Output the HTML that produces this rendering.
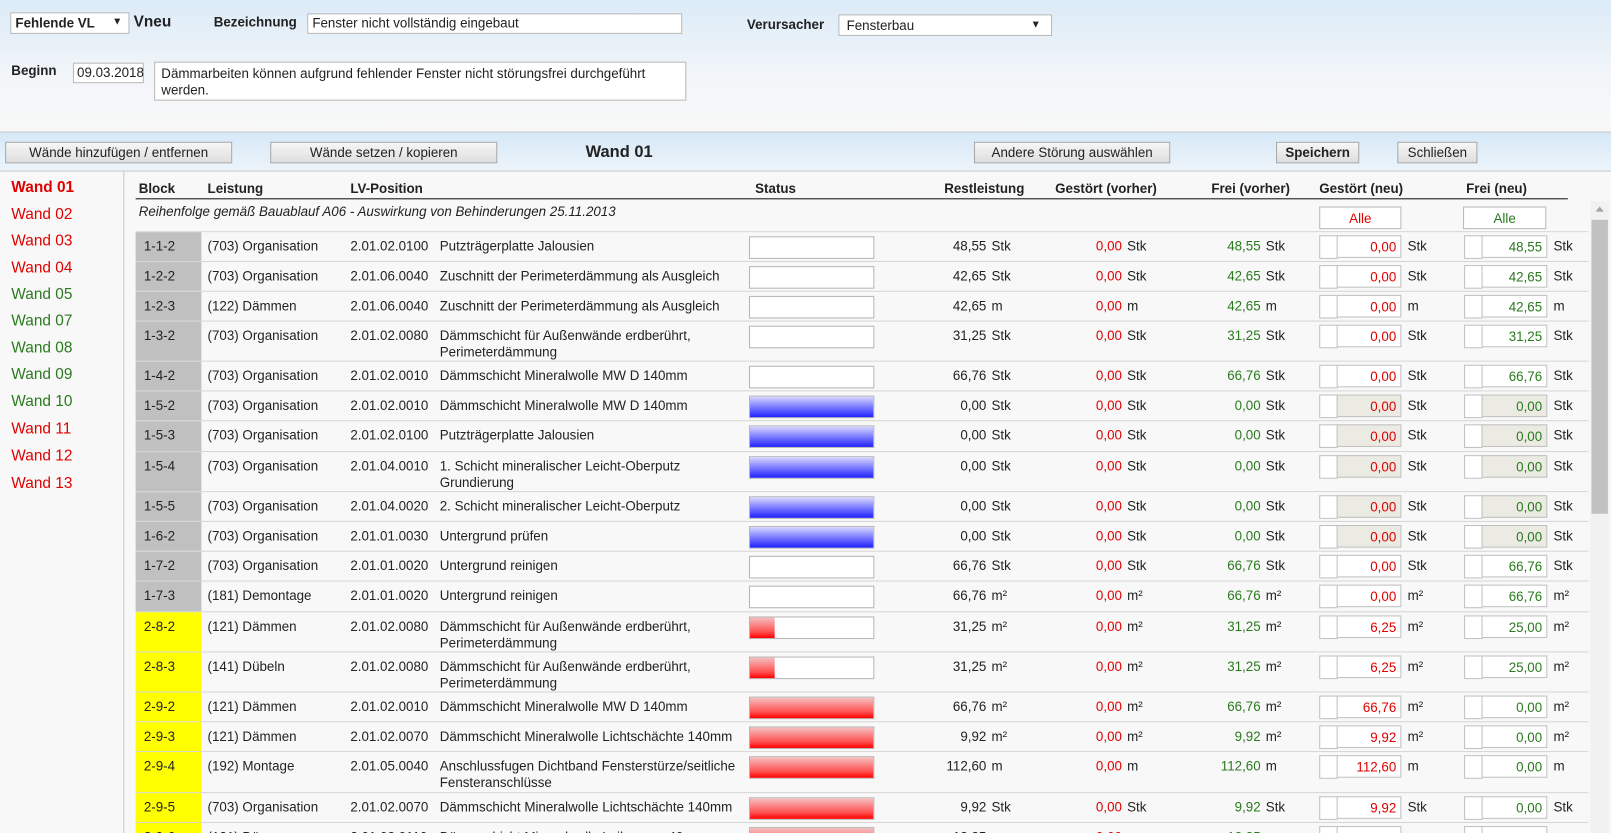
<!DOCTYPE html>
<html><head><meta charset="utf-8">
<style>
html,body{margin:0;padding:0;width:1611px;height:833px;overflow:hidden;background:#f8f8f8;font-family:"Liberation Sans",Arial,sans-serif;font-size:13px;color:#222}
#w{position:absolute;left:0;top:0;width:1568px;height:811px;transform:scale(1.02742);transform-origin:0 0;overflow:hidden}
.a{position:absolute;white-space:nowrap}
.top{position:absolute;left:0;top:0;width:1568px;height:129px;background:linear-gradient(#dcebf8,#f3f6f9 60%,#f8f8f8)}
.tb{position:absolute;left:0;top:128px;width:1568px;height:37px;background:linear-gradient(#d6e8f7,#edf4fa);border-top:1px solid #c8c8c8;border-bottom:1px solid #c8c8c8}
.inp{position:absolute;background:#fff;border:1px solid #b8b8b8;box-sizing:border-box;padding:1px 4px;white-space:nowrap}
.btn{position:absolute;box-sizing:border-box;border:1px solid #a8a8a8;background:linear-gradient(#f6f6f6,#dedede);text-align:center;line-height:19px;height:21px}
.bold{font-weight:bold}
.red{color:#e00000}.grn{color:#2a7a1e}
.side{position:absolute;left:0;top:166px;width:120px;height:700px;border-right:1px solid #c8c8c8}
.side div{position:absolute;left:11px;font-size:15px}
.r{position:absolute;left:132px;width:1414px;border-bottom:1px solid #d6d6d6}
.r>span{position:absolute;top:6px;line-height:16px;white-space:nowrap}
.b{position:absolute;left:0;top:0;width:64px;bottom:0;background:#c0c0c0}
.b.y{background:#ffff00}
.b span{position:absolute;left:8px;top:6px;line-height:16px}
.st{position:absolute;left:597px;top:4px;width:122px;height:22px;box-sizing:border-box;border:1px solid #b5b5b5;background:#fff}
.st i{position:absolute;left:0;top:0;bottom:0}
.bl{background:linear-gradient(#d8d8ff,#6a6aff 60%,#2020ff)}
.rd{background:linear-gradient(#f5c0c0,#ff5050 70%,#ff0000)}
.nr{width:100px;text-align:right}
.sm{position:absolute;top:3px;width:18px;height:23px;box-sizing:border-box;border:1px solid #c0c0c0;background:#fff}
.in{position:absolute;top:3px;height:22px;box-sizing:border-box;border:1px solid #c0c0c0;background:#fff;text-align:right;padding:3px 4px 0 0;line-height:15px}
.g{left:1169px;width:63px}.f{left:1310px;width:64px}
.dis{background:#ebebe4}
</style></head><body><div id="w">
<div class="top"></div>
<div class="inp bold" style="left:10px;top:12px;width:116px;height:21px;padding-top:2px">Fehlende VL<span style="position:absolute;right:6px;top:3px;font-size:10px">▼</span></div>
<div class="a bold" style="left:130px;top:13px;font-size:15px">Vneu</div>
<div class="a bold" style="left:208px;top:14px">Bezeichnung</div>
<div class="inp" style="left:299px;top:13px;width:365px;height:20px">Fenster nicht vollständig eingebaut</div>
<div class="a bold" style="left:727px;top:16px">Verursacher</div>
<div class="inp" style="left:816px;top:14px;width:208px;height:21px;padding-left:7px;padding-top:2px">Fensterbau<span style="position:absolute;right:10px;top:4px;font-size:10px">▼</span></div>
<div class="a bold" style="left:11px;top:61px">Beginn</div>
<div class="inp" style="left:71px;top:61px;width:69px;height:20px;padding-left:3px">09.03.2018</div>
<div class="inp" style="left:150px;top:60px;width:518px;height:38px;white-space:normal;padding:3px 6px;line-height:16px">Dämmarbeiten können aufgrund fehlender Fenster nicht störungsfrei durchgeführt werden.</div>
<div class="tb"></div>
<div class="btn" style="left:5px;top:138px;width:221px">Wände hinzufügen / entfernen</div>
<div class="btn" style="left:263px;top:138px;width:221px">Wände setzen / kopieren</div>
<div class="a bold" style="left:570px;top:140px;font-size:16px">Wand 01</div>
<div class="btn" style="left:948px;top:138px;width:191px">Andere Störung auswählen</div>
<div class="btn bold" style="left:1242px;top:138px;width:81px">Speichern</div>
<div class="btn" style="left:1360px;top:138px;width:78px">Schließen</div>
<div class="side">
<div class="red bold" style="top:8px">Wand 01</div>
<div class="red" style="top:34px">Wand 02</div>
<div class="red" style="top:60px">Wand 03</div>
<div class="red" style="top:86px">Wand 04</div>
<div class="grn" style="top:112px">Wand 05</div>
<div class="grn" style="top:138px">Wand 07</div>
<div class="grn" style="top:164px">Wand 08</div>
<div class="grn" style="top:190px">Wand 09</div>
<div class="grn" style="top:216px">Wand 10</div>
<div class="red" style="top:243px">Wand 11</div>
<div class="red" style="top:269px">Wand 12</div>
<div class="red" style="top:296px">Wand 13</div>
</div>
<div class="a bold" style="left:135px;top:176px">Block</div>
<div class="a bold" style="left:202px;top:176px">Leistung</div>
<div class="a bold" style="left:341px;top:176px">LV-Position</div>
<div class="a bold" style="left:735px;top:176px">Status</div>
<div class="a bold" style="left:919px;top:176px">Restleistung</div>
<div class="a bold" style="left:1027px;top:176px">Gestört (vorher)</div>
<div class="a bold" style="left:1179px;top:176px">Frei (vorher)</div>
<div class="a bold" style="left:1284px;top:176px">Gestört (neu)</div>
<div class="a bold" style="left:1427px;top:176px">Frei (neu)</div>
<div class="a" style="left:132px;top:193px;width:1394px;height:1px;background:#111"></div>
<div class="a" style="left:135px;top:198px;font-style:italic">Reihenfolge gemäß Bauablauf A06 - Auswirkung von Behinderungen 25.11.2013</div>
<div class="inp red" style="left:1284px;top:201px;width:80px;height:22px;text-align:center;padding-top:3px">Alle</div>
<div class="inp grn" style="left:1424px;top:201px;width:81px;height:22px;text-align:center;padding-top:3px">Alle</div>
<div class="a" style="left:132px;top:225px;width:1414px;height:1px;background:#d6d6d6"></div>
<div class="a" style="left:1548px;top:196px;width:18px;height:620px;background:#f1f1f1"></div>
<div class="a" style="left:1549px;top:214px;width:16px;height:286px;background:#c1c1c1"></div>
<div class="a" style="left:1553px;top:201px;width:0;height:0;border-left:4px solid transparent;border-right:4px solid transparent;border-bottom:5px solid #a3a3a3"></div>

<div class="r" style="top:226px;height:28px"><div class="b"><span>1-1-2</span></div><span style="left:70px">(703) Organisation</span><span style="left:209px">2.01.02.0100</span><span style="left:296px">Putzträgerplatte Jalousien</span><div class="st"></div><span class="nr" style="left:728px">48,55</span><span style="left:833px">Stk</span><span class="nr red" style="left:860px">0,00</span><span style="left:965px">Stk</span><span class="nr grn" style="left:995px">48,55</span><span style="left:1100px">Stk</span><div class="sm" style="left:1152px"></div><div class="in red g">0,00</div><span style="left:1238px">Stk</span><div class="sm" style="left:1293px"></div><div class="in grn f">48,55</div><span style="left:1380px">Stk</span></div>

<div class="r" style="top:255px;height:28px"><div class="b"><span>1-2-2</span></div><span style="left:70px">(703) Organisation</span><span style="left:209px">2.01.06.0040</span><span style="left:296px">Zuschnitt der Perimeterdämmung als Ausgleich</span><div class="st"></div><span class="nr" style="left:728px">42,65</span><span style="left:833px">Stk</span><span class="nr red" style="left:860px">0,00</span><span style="left:965px">Stk</span><span class="nr grn" style="left:995px">42,65</span><span style="left:1100px">Stk</span><div class="sm" style="left:1152px"></div><div class="in red g">0,00</div><span style="left:1238px">Stk</span><div class="sm" style="left:1293px"></div><div class="in grn f">42,65</div><span style="left:1380px">Stk</span></div>

<div class="r" style="top:284px;height:28px"><div class="b"><span>1-2-3</span></div><span style="left:70px">(122) Dämmen</span><span style="left:209px">2.01.06.0040</span><span style="left:296px">Zuschnitt der Perimeterdämmung als Ausgleich</span><div class="st"></div><span class="nr" style="left:728px">42,65</span><span style="left:833px">m</span><span class="nr red" style="left:860px">0,00</span><span style="left:965px">m</span><span class="nr grn" style="left:995px">42,65</span><span style="left:1100px">m</span><div class="sm" style="left:1152px"></div><div class="in red g">0,00</div><span style="left:1238px">m</span><div class="sm" style="left:1293px"></div><div class="in grn f">42,65</div><span style="left:1380px">m</span></div>

<div class="r" style="top:313px;height:38px"><div class="b"><span>1-3-2</span></div><span style="left:70px">(703) Organisation</span><span style="left:209px">2.01.02.0080</span><span style="left:296px">Dämmschicht für Außenwände erdberührt,<br>Perimeterdämmung</span><div class="st"></div><span class="nr" style="left:728px">31,25</span><span style="left:833px">Stk</span><span class="nr red" style="left:860px">0,00</span><span style="left:965px">Stk</span><span class="nr grn" style="left:995px">31,25</span><span style="left:1100px">Stk</span><div class="sm" style="left:1152px"></div><div class="in red g">0,00</div><span style="left:1238px">Stk</span><div class="sm" style="left:1293px"></div><div class="in grn f">31,25</div><span style="left:1380px">Stk</span></div>

<div class="r" style="top:352px;height:28px"><div class="b"><span>1-4-2</span></div><span style="left:70px">(703) Organisation</span><span style="left:209px">2.01.02.0010</span><span style="left:296px">Dämmschicht Mineralwolle MW D 140mm</span><div class="st"></div><span class="nr" style="left:728px">66,76</span><span style="left:833px">Stk</span><span class="nr red" style="left:860px">0,00</span><span style="left:965px">Stk</span><span class="nr grn" style="left:995px">66,76</span><span style="left:1100px">Stk</span><div class="sm" style="left:1152px"></div><div class="in red g">0,00</div><span style="left:1238px">Stk</span><div class="sm" style="left:1293px"></div><div class="in grn f">66,76</div><span style="left:1380px">Stk</span></div>

<div class="r" style="top:381px;height:28px"><div class="b"><span>1-5-2</span></div><span style="left:70px">(703) Organisation</span><span style="left:209px">2.01.02.0010</span><span style="left:296px">Dämmschicht Mineralwolle MW D 140mm</span><div class="st"><i class="bl" style="width:100%"></i></div><span class="nr" style="left:728px">0,00</span><span style="left:833px">Stk</span><span class="nr red" style="left:860px">0,00</span><span style="left:965px">Stk</span><span class="nr grn" style="left:995px">0,00</span><span style="left:1100px">Stk</span><div class="sm" style="left:1152px"></div><div class="in red dis g">0,00</div><span style="left:1238px">Stk</span><div class="sm" style="left:1293px"></div><div class="in grn dis f">0,00</div><span style="left:1380px">Stk</span></div>

<div class="r" style="top:410px;height:29px"><div class="b"><span>1-5-3</span></div><span style="left:70px">(703) Organisation</span><span style="left:209px">2.01.02.0100</span><span style="left:296px">Putzträgerplatte Jalousien</span><div class="st"><i class="bl" style="width:100%"></i></div><span class="nr" style="left:728px">0,00</span><span style="left:833px">Stk</span><span class="nr red" style="left:860px">0,00</span><span style="left:965px">Stk</span><span class="nr grn" style="left:995px">0,00</span><span style="left:1100px">Stk</span><div class="sm" style="left:1152px"></div><div class="in red dis g">0,00</div><span style="left:1238px">Stk</span><div class="sm" style="left:1293px"></div><div class="in grn dis f">0,00</div><span style="left:1380px">Stk</span></div>

<div class="r" style="top:440px;height:38px"><div class="b"><span>1-5-4</span></div><span style="left:70px">(703) Organisation</span><span style="left:209px">2.01.04.0010</span><span style="left:296px">1. Schicht mineralischer Leicht-Oberputz<br>Grundierung</span><div class="st"><i class="bl" style="width:100%"></i></div><span class="nr" style="left:728px">0,00</span><span style="left:833px">Stk</span><span class="nr red" style="left:860px">0,00</span><span style="left:965px">Stk</span><span class="nr grn" style="left:995px">0,00</span><span style="left:1100px">Stk</span><div class="sm" style="left:1152px"></div><div class="in red dis g">0,00</div><span style="left:1238px">Stk</span><div class="sm" style="left:1293px"></div><div class="in grn dis f">0,00</div><span style="left:1380px">Stk</span></div>

<div class="r" style="top:479px;height:28px"><div class="b"><span>1-5-5</span></div><span style="left:70px">(703) Organisation</span><span style="left:209px">2.01.04.0020</span><span style="left:296px">2. Schicht mineralischer Leicht-Oberputz</span><div class="st"><i class="bl" style="width:100%"></i></div><span class="nr" style="left:728px">0,00</span><span style="left:833px">Stk</span><span class="nr red" style="left:860px">0,00</span><span style="left:965px">Stk</span><span class="nr grn" style="left:995px">0,00</span><span style="left:1100px">Stk</span><div class="sm" style="left:1152px"></div><div class="in red dis g">0,00</div><span style="left:1238px">Stk</span><div class="sm" style="left:1293px"></div><div class="in grn dis f">0,00</div><span style="left:1380px">Stk</span></div>

<div class="r" style="top:508px;height:28px"><div class="b"><span>1-6-2</span></div><span style="left:70px">(703) Organisation</span><span style="left:209px">2.01.01.0030</span><span style="left:296px">Untergrund prüfen</span><div class="st"><i class="bl" style="width:100%"></i></div><span class="nr" style="left:728px">0,00</span><span style="left:833px">Stk</span><span class="nr red" style="left:860px">0,00</span><span style="left:965px">Stk</span><span class="nr grn" style="left:995px">0,00</span><span style="left:1100px">Stk</span><div class="sm" style="left:1152px"></div><div class="in red dis g">0,00</div><span style="left:1238px">Stk</span><div class="sm" style="left:1293px"></div><div class="in grn dis f">0,00</div><span style="left:1380px">Stk</span></div>

<div class="r" style="top:537px;height:28px"><div class="b"><span>1-7-2</span></div><span style="left:70px">(703) Organisation</span><span style="left:209px">2.01.01.0020</span><span style="left:296px">Untergrund reinigen</span><div class="st"></div><span class="nr" style="left:728px">66,76</span><span style="left:833px">Stk</span><span class="nr red" style="left:860px">0,00</span><span style="left:965px">Stk</span><span class="nr grn" style="left:995px">66,76</span><span style="left:1100px">Stk</span><div class="sm" style="left:1152px"></div><div class="in red g">0,00</div><span style="left:1238px">Stk</span><div class="sm" style="left:1293px"></div><div class="in grn f">66,76</div><span style="left:1380px">Stk</span></div>

<div class="r" style="top:566px;height:29px"><div class="b"><span>1-7-3</span></div><span style="left:70px">(181) Demontage</span><span style="left:209px">2.01.01.0020</span><span style="left:296px">Untergrund reinigen</span><div class="st"></div><span class="nr" style="left:728px">66,76</span><span style="left:833px">m²</span><span class="nr red" style="left:860px">0,00</span><span style="left:965px">m²</span><span class="nr grn" style="left:995px">66,76</span><span style="left:1100px">m²</span><div class="sm" style="left:1152px"></div><div class="in red g">0,00</div><span style="left:1238px">m²</span><div class="sm" style="left:1293px"></div><div class="in grn f">66,76</div><span style="left:1380px">m²</span></div>

<div class="r" style="top:596px;height:38px"><div class="b y"><span>2-8-2</span></div><span style="left:70px">(121) Dämmen</span><span style="left:209px">2.01.02.0080</span><span style="left:296px">Dämmschicht für Außenwände erdberührt,<br>Perimeterdämmung</span><div class="st"><i class="rd" style="width:24px"></i></div><span class="nr" style="left:728px">31,25</span><span style="left:833px">m²</span><span class="nr red" style="left:860px">0,00</span><span style="left:965px">m²</span><span class="nr grn" style="left:995px">31,25</span><span style="left:1100px">m²</span><div class="sm" style="left:1152px"></div><div class="in red g">6,25</div><span style="left:1238px">m²</span><div class="sm" style="left:1293px"></div><div class="in grn f">25,00</div><span style="left:1380px">m²</span></div>

<div class="r" style="top:635px;height:38px"><div class="b y"><span>2-8-3</span></div><span style="left:70px">(141) Dübeln</span><span style="left:209px">2.01.02.0080</span><span style="left:296px">Dämmschicht für Außenwände erdberührt,<br>Perimeterdämmung</span><div class="st"><i class="rd" style="width:24px"></i></div><span class="nr" style="left:728px">31,25</span><span style="left:833px">m²</span><span class="nr red" style="left:860px">0,00</span><span style="left:965px">m²</span><span class="nr grn" style="left:995px">31,25</span><span style="left:1100px">m²</span><div class="sm" style="left:1152px"></div><div class="in red g">6,25</div><span style="left:1238px">m²</span><div class="sm" style="left:1293px"></div><div class="in grn f">25,00</div><span style="left:1380px">m²</span></div>

<div class="r" style="top:674px;height:28px"><div class="b y"><span>2-9-2</span></div><span style="left:70px">(121) Dämmen</span><span style="left:209px">2.01.02.0010</span><span style="left:296px">Dämmschicht Mineralwolle MW D 140mm</span><div class="st"><i class="rd" style="width:100%"></i></div><span class="nr" style="left:728px">66,76</span><span style="left:833px">m²</span><span class="nr red" style="left:860px">0,00</span><span style="left:965px">m²</span><span class="nr grn" style="left:995px">66,76</span><span style="left:1100px">m²</span><div class="sm" style="left:1152px"></div><div class="in red g">66,76</div><span style="left:1238px">m²</span><div class="sm" style="left:1293px"></div><div class="in grn f">0,00</div><span style="left:1380px">m²</span></div>

<div class="r" style="top:703px;height:28px"><div class="b y"><span>2-9-3</span></div><span style="left:70px">(121) Dämmen</span><span style="left:209px">2.01.02.0070</span><span style="left:296px">Dämmschicht Mineralwolle Lichtschächte 140mm</span><div class="st"><i class="rd" style="width:100%"></i></div><span class="nr" style="left:728px">9,92</span><span style="left:833px">m²</span><span class="nr red" style="left:860px">0,00</span><span style="left:965px">m²</span><span class="nr grn" style="left:995px">9,92</span><span style="left:1100px">m²</span><div class="sm" style="left:1152px"></div><div class="in red g">9,92</div><span style="left:1238px">m²</span><div class="sm" style="left:1293px"></div><div class="in grn f">0,00</div><span style="left:1380px">m²</span></div>

<div class="r" style="top:732px;height:39px"><div class="b y"><span>2-9-4</span></div><span style="left:70px">(192) Montage</span><span style="left:209px">2.01.05.0040</span><span style="left:296px">Anschlussfugen Dichtband Fensterstürze/seitliche<br>Fensteranschlüsse</span><div class="st"><i class="rd" style="width:100%"></i></div><span class="nr" style="left:728px">112,60</span><span style="left:833px">m</span><span class="nr red" style="left:860px">0,00</span><span style="left:965px">m</span><span class="nr grn" style="left:995px">112,60</span><span style="left:1100px">m</span><div class="sm" style="left:1152px"></div><div class="in red g">112,60</div><span style="left:1238px">m</span><div class="sm" style="left:1293px"></div><div class="in grn f">0,00</div><span style="left:1380px">m</span></div>

<div class="r" style="top:772px;height:28px"><div class="b y"><span>2-9-5</span></div><span style="left:70px">(703) Organisation</span><span style="left:209px">2.01.02.0070</span><span style="left:296px">Dämmschicht Mineralwolle Lichtschächte 140mm</span><div class="st"><i class="rd" style="width:100%"></i></div><span class="nr" style="left:728px">9,92</span><span style="left:833px">Stk</span><span class="nr red" style="left:860px">0,00</span><span style="left:965px">Stk</span><span class="nr grn" style="left:995px">9,92</span><span style="left:1100px">Stk</span><div class="sm" style="left:1152px"></div><div class="in red g">9,92</div><span style="left:1238px">Stk</span><div class="sm" style="left:1293px"></div><div class="in grn f">0,00</div><span style="left:1380px">Stk</span></div>

<div class="r" style="top:801px;height:30px"><div class="b y"><span>2-9-6</span></div><span style="left:70px">(121) Dämmen</span><span style="left:209px">2.01.02.0110</span><span style="left:296px">Dämmschicht Mineralwolle Laibungen 40mm</span><div class="st"><i class="rd" style="width:100%"></i></div><span class="nr" style="left:728px">12,35</span><span style="left:833px">m</span><span class="nr red" style="left:860px">0,00</span><span style="left:965px">m</span><span class="nr grn" style="left:995px">12,35</span><span style="left:1100px">m</span><div class="sm" style="left:1152px"></div><div class="in red g">12,35</div><span style="left:1238px">m</span><div class="sm" style="left:1293px"></div><div class="in grn f">0,00</div><span style="left:1380px">m</span></div>
</div></body></html>
